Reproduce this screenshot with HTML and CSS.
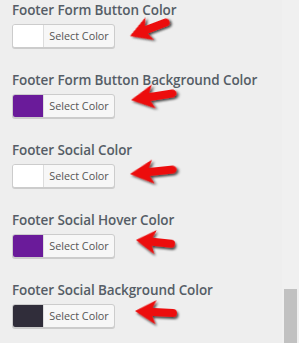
FILE: index.html
```html
<!DOCTYPE html>
<html lang="en">
<head>
    <meta charset="UTF-8">
    <title>Footer Colors</title>
    <link rel="stylesheet" href="styles.css">
</head>
<body>
    <svg width="0" height="0" class="defs">
        <defs>
            <filter id="arrowShadow" x="-30%" y="-60%" width="160%" height="220%">
                <feDropShadow dx="1.5" dy="2" stdDeviation="1.2" flood-color="#000" flood-opacity="0.7"/>
            </filter>
            <path id="arrow" d="M0,0 L20,-12 L16.5,-4 L36,-4 A4,4 0 0 1 36,4 L16.5,4 L20,12 Z"/>
        </defs>
    </svg>

    <div class="panel">
        <div class="control">
            <h3>Footer Form Button Color</h3>
            <div class="picker-row">
                <button class="color-btn"><span class="swatch swatch-white"></span><span class="label">Select Color</span></button>
                <svg class="arrow" width="60" height="40" style="left: 117px; top: -6px;">
                    <use href="#arrow" transform="translate(1 18) rotate(-20.7) scale(1.05 1)" filter="url(#arrowShadow)"/>
                </svg>
            </div>
        </div>

        <div class="control">
            <h3>Footer Form Button Background Color</h3>
            <div class="picker-row">
                <button class="color-btn"><span class="swatch swatch-purple"></span><span class="label">Select Color</span></button>
                <svg class="arrow" width="60" height="40" style="left: 117px; top: -14px;">
                    <use href="#arrow" transform="translate(2 20) rotate(-9) scale(1.15 1)" filter="url(#arrowShadow)"/>
                </svg>
            </div>
        </div>

        <div class="control">
            <h3>Footer Social Color</h3>
            <div class="picker-row">
                <button class="color-btn"><span class="swatch swatch-white"></span><span class="label">Select Color</span></button>
                <svg class="arrow" width="60" height="40" style="left: 117px; top: -10px;">
                    <use href="#arrow" transform="translate(1 20) rotate(-6) scale(1.17 1)" filter="url(#arrowShadow)"/>
                </svg>
            </div>
        </div>

        <div class="control">
            <h3>Footer Social Hover Color</h3>
            <div class="picker-row">
                <button class="color-btn"><span class="swatch swatch-purple"></span><span class="label">Select Color</span></button>
                <svg class="arrow" width="60" height="40" style="left: 123px; top: -14px;">
                    <use href="#arrow" transform="translate(1 20) rotate(6) scale(0.98 1)" filter="url(#arrowShadow)"/>
                </svg>
            </div>
        </div>

        <div class="control">
            <h3>Footer Social Background Color</h3>
            <div class="picker-row">
                <button class="color-btn"><span class="swatch swatch-dark"></span><span class="label">Select Color</span></button>
                <svg class="arrow" width="60" height="40" style="left: 122px; top: -13px;">
                    <use href="#arrow" transform="translate(1 20) rotate(3) scale(1.05 1)" filter="url(#arrowShadow)"/>
                </svg>
            </div>
        </div>
    </div>

    <div class="scroll-track">
        <div class="scroll-thumb"></div>
    </div>
</body>
</html>
```

FILE: styles.css
```css
body {
    margin: 0;
    padding: 0;
    background-color: #eeeeee;
    font-family: 'Open Sans', sans-serif;
    display: flex;
    height: 343px;
    overflow: hidden;
}

.defs {
    position: absolute;
}

.panel {
    width: 282px;
    padding: 0 0 0 12px;
    box-sizing: border-box;
}

.control {
    height: 70px;
}

.control h3 {
    margin: 0 0 4px;
    font-size: 13.5px;
    line-height: 20px;
    font-weight: 600;
    color: #555d66;
    white-space: nowrap;
    letter-spacing: -0.1px;
}

.picker-row {
    position: relative;
    height: 24px;
}

.color-btn {
    display: flex;
    align-items: stretch;
    width: 103px;
    height: 24px;
    padding: 0;
    margin: 0;
    border: 1px solid #cccccc;
    border-radius: 3px;
    background-color: #f7f7f7;
    box-shadow: 0 1px 0 #cccccc;
    overflow: hidden;
    box-sizing: border-box;
    cursor: pointer;
}

.swatch {
    width: 30px;
    flex-shrink: 0;
    border-right: 1px solid #dddddd;
}

.swatch-white {
    background-color: #ffffff;
}

.swatch-purple {
    background-color: #6a1b9a;
}

.swatch-dark {
    background-color: #302d3a;
}

.label {
    flex: 1;
    font-family: 'Open Sans', sans-serif;
    font-size: 10.8px;
    line-height: 22px;
    color: #555555;
    text-align: center;
    white-space: nowrap;
}

.arrow {
    position: absolute;
    fill: #ec0a0a;
    overflow: visible;
}

.scroll-track {
    width: 17px;
    background-color: #f0f0f0;
    display: flex;
    justify-content: center;
}

.scroll-thumb {
    width: 13px;
    height: 60px;
    margin-top: 289px;
    background-color: #c1c1c1;
}
```
